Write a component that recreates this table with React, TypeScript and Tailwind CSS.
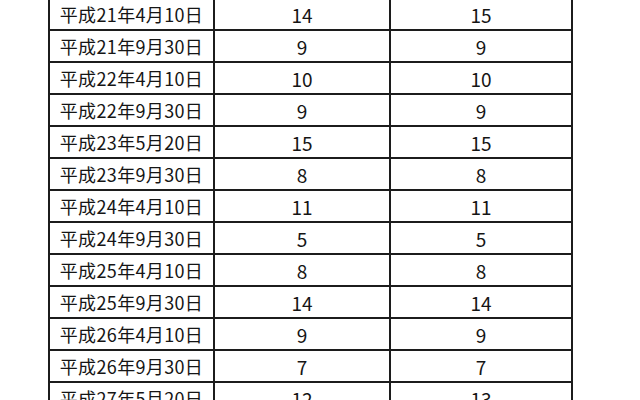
import React from "react";

const rows: [string, string, string][] = [
  ["平成21年4月10日", "14", "15"],
  ["平成21年9月30日", "9", "9"],
  ["平成22年4月10日", "10", "10"],
  ["平成22年9月30日", "9", "9"],
  ["平成23年5月20日", "15", "15"],
  ["平成23年9月30日", "8", "8"],
  ["平成24年4月10日", "11", "11"],
  ["平成24年9月30日", "5", "5"],
  ["平成25年4月10日", "8", "8"],
  ["平成25年9月30日", "14", "14"],
  ["平成26年4月10日", "9", "9"],
  ["平成26年9月30日", "7", "7"],
  ["平成27年5月20日", "12", "13"],
];

export default function App() {
  return (
    <div
      className="w-[640px] h-[400px] overflow-hidden bg-white text-[#151515]"
      style={{ fontFamily: '"Noto Sans CJK JP", "Noto Sans", sans-serif' }}
    >
      <div className="ml-[48px] -mt-px w-[525px] border-x-2 border-[#1c1c1c]">
        {rows.map(([d, a, b]) => (
          <div key={d} className="flex h-[32px] border-b-2 border-[#1c1c1c]">
            <div className="w-[165px] flex items-center justify-center border-r-2 border-[#1c1c1c] text-[18px] leading-none tracking-[0.35px]">
              {d}
            </div>
            <div className="w-[176px] flex items-center justify-center border-r-2 border-[#1c1c1c] text-[19px] leading-none">
              {a}
            </div>
            <div className="flex-1 flex items-center justify-center text-[19px] leading-none">
              {b}
            </div>
          </div>
        ))}
      </div>
    </div>
  );
}
